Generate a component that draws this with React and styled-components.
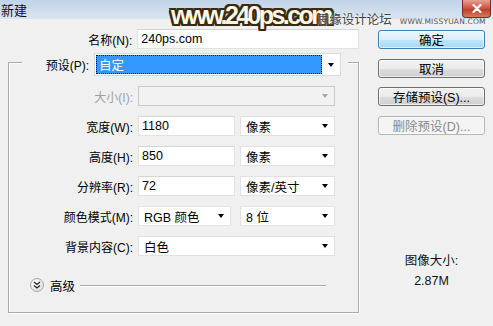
import React from 'react';
import styled, { createGlobalStyle } from 'styled-components';

const GlobalStyle = createGlobalStyle`
  html, body {
    margin: 0;
    padding: 0;
    background: #f0f0f0;
  }
  * { box-sizing: border-box; }
`;

const FONT = `"Liberation Sans", "Noto Sans CJK SC", sans-serif`;

const Window = styled.div`
  position: relative;
  width: 493px;
  height: 326px;
  background: #f0f0f0;
  font-family: ${FONT};
  font-size: 12px;
  color: #000;
  overflow: hidden;
  display: flex;
  flex-direction: column;
`;

const TitleBar = styled.div`
  height: 19px;
  flex-shrink: 0;
  background: linear-gradient(#c2d4e8, #d9e4f0);
  display: flex;
  align-items: center;
  justify-content: space-between;
  padding-left: 1px;
  font-size: 13px;
  color: #111;
`;

const CloseButton = styled.div`
  width: 29px;
  height: 18px;
  margin-right: 2px;
  align-self: flex-start;
  border: 1px solid #7a2a20;
  border-top: none;
  border-radius: 0 0 4px 4px;
  background: linear-gradient(#e7a090, #c9513d 50%, #b93a26 51%, #d67a5c);
  display: flex;
  align-items: center;
  justify-content: center;
`;

const Watermark = styled.div`
  position: absolute;
  left: 171px;
  top: 1px;
  display: flex;
  align-items: baseline;
  white-space: nowrap;
  pointer-events: none;
`;

const WmBig = styled.span`
  font-family: "Liberation Sans", sans-serif;
  font-weight: 800;
  font-size: 25px;
  letter-spacing: -2.6px;
  color: #fff9e6;
  text-shadow:
    -2px 0 0 #3b2a12, 2px 0 0 #3b2a12, 0 -2px 0 #3b2a12, 0 2px 0 #3b2a12,
    -2px -2px 0 #3b2a12, 2px 2px 0 #3b2a12, -2px 2px 0 #3b2a12, 2px -2px 0 #3b2a12,
    -1px -2px 0 #3b2a12, 1px 2px 0 #3b2a12, -2px 1px 0 #3b2a12, 2px -1px 0 #3b2a12;
`;

const WmCn = styled.span`
  font-family: "Noto Sans CJK SC", sans-serif;
  font-size: 12.5px;
  color: #444;
  margin-left: -14px;
  text-shadow: 0 0 2px #fff;
`;

const WmSmall = styled.span`
  font-family: "DejaVu Sans", sans-serif;
  font-size: 7.5px;
  color: #555;
  margin-left: 8px;
  letter-spacing: 0.2px;
`;

const Body = styled.div`
  flex: 1;
  display: flex;
  padding: 10px 0 0 8px;
  gap: 19px;
`;

const LeftColumn = styled.div`
  width: 351px;
  display: flex;
  flex-direction: column;
`;

const Row = styled.div`
  display: flex;
  align-items: center;
  height: 20px;
`;

const Label = styled.div`
  width: ${(p) => p.$w}px;
  margin-right: 5px;
  text-align: right;
  white-space: nowrap;
  color: ${(p) => (p.$disabled ? '#a0a0a0' : '#000')};
`;

const TextInput = styled.div`
  width: ${(p) => p.$w}px;
  height: 20px;
  background: #fff;
  border: 1px solid #e2e2e2;
  border-top-color: #d4d4d4;
  padding-left: 3px;
  display: flex;
  align-items: center;
  font-size: 12.5px;
`;

const Select = styled.div`
  width: ${(p) => p.$w}px;
  height: 20px;
  margin-left: ${(p) => p.$ml || 0}px;
  background: ${(p) => (p.$disabled ? '#f2f2f2' : '#fff')};
  border: 1px solid ${(p) => (p.$disabled ? '#c9c9c9' : '#e2e2e2')};
  display: flex;
  align-items: center;
  justify-content: space-between;
  padding: 0 3px 0 5px;
  font-size: 12.5px;
`;

const Arrow = styled.span`
  width: 0;
  height: 0;
  border-left: 3.5px solid transparent;
  border-right: 3.5px solid transparent;
  border-top: 4px solid ${(p) => (p.$disabled ? '#a8a8a8' : '#000')};
  margin-right: ${(p) => p.$mr ?? 3}px;
`;

const GroupBox = styled.div`
  margin-top: 13px;
  border: 1px solid #a9a9a9;
  box-shadow: inset 1px 1px 0 #fff, 1px 1px 0 #fff;
  height: 251px;
  display: flex;
  flex-direction: column;
  gap: 10px;
`;

const Legend = styled.div`
  margin: -10px 0 0 13px;
  width: 326px;
  height: 23px;
  background: #f0f0f0;
  display: flex;
  align-items: center;
`;

const PresetSelect = styled.div`
  width: 247px;
  height: 23px;
  background: #fff;
  border: 1px solid #dadada;
  padding: 1px;
  display: flex;
  align-items: center;
`;

const PresetValue = styled.div`
  width: 226px;
  height: 19px;
  background: #3399ff;
  outline: 1px dotted #000;
  outline-offset: -1px;
  color: #fff;
  padding-left: 3px;
  display: flex;
  align-items: center;
  font-size: 12.5px;
`;

const PresetArrowBox = styled.div`
  flex: 1;
  display: flex;
  justify-content: center;
`;

const AdvancedRow = styled.div`
  display: flex;
  align-items: center;
  margin: 12px 0 0 21px;
  width: 296px;
  height: 14px;
`;

const ToggleCircle = styled.div`
  width: 14px;
  height: 14px;
  border-radius: 50%;
  border: 1px solid #a8a8a8;
  background: radial-gradient(circle at 40% 35%, #ffffff, #e4e4e4 70%, #cfcfcf);
  display: flex;
  align-items: center;
  justify-content: center;
`;

const AdvancedText = styled.span`
  margin: 0 5px 0 6px;
  font-size: 12.5px;
`;

const Rule = styled.div`
  flex: 1;
  height: 1px;
  background: #a9a9a9;
  box-shadow: 0 1px 0 #fff;
`;

const RightColumn = styled.div`
  width: 107px;
  display: flex;
  flex-direction: column;
  padding-top: 1px;
`;

const ButtonStack = styled.div`
  display: flex;
  flex-direction: column;
  gap: 9.5px;
`;

const Button = styled.div`
  height: 19px;
  border-radius: 3px;
  display: flex;
  align-items: center;
  justify-content: center;
  font-size: 12.5px;
  border: 1px solid ${(p) => (p.$primary ? '#3c7fb1' : p.$disabled ? '#b5b5b5' : '#707070')};
  background: ${(p) =>
    p.$primary
      ? 'linear-gradient(#eaf6fd, #d9f0fc 50%, #bee6fd 51%, #a7d9f5)'
      : p.$disabled
      ? '#f4f4f4'
      : 'linear-gradient(#f2f2f2, #ebebeb 50%, #dddddd 51%, #cfcfcf)'};
  color: ${(p) => (p.$disabled ? '#8a8a8a' : '#000')};
  box-shadow: inset 0 0 0 1px rgba(255, 255, 255, 0.6);
`;

const SizeInfo = styled.div`
  margin-top: 116px;
  text-align: center;
  line-height: 20px;
  font-size: 12.5px;
  color: #111;
`;

const DoubleChevron = () => (
  <svg width="8" height="8" viewBox="0 0 8 8">
    <path d="M1 1 L4 3.5 L7 1 M1 4.5 L4 7 L7 4.5" fill="none" stroke="#222" strokeWidth="1.3" />
  </svg>
);

const FieldRow = ({ label, children, disabled }) => (
  <Row>
    <Label $w={124} $disabled={disabled}>{label}</Label>
    {children}
  </Row>
);

export default function App() {
  return (
    <>
      <GlobalStyle />
      <Window>
        <TitleBar>
          <span>新建</span>
          <CloseButton>
            <svg width="10" height="9" viewBox="0 0 10 9">
              <path d="M1.5 1 L8.5 8 M8.5 1 L1.5 8" stroke="#fff" strokeWidth="2.2" strokeLinecap="round" />
            </svg>
          </CloseButton>
        </TitleBar>

        <Watermark>
          <WmBig>www.240ps.com</WmBig>
          <WmCn>思缘设计论坛</WmCn>
          <WmSmall>WWW.MISSYUAN.COM</WmSmall>
        </Watermark>

        <Body>
          <LeftColumn>
            <Row>
              <Label $w={125}>名称(N):</Label>
              <TextInput $w={223}>240ps.com</TextInput>
            </Row>

            <GroupBox>
              <Legend>
                <Label $w={67}>预设(P):</Label>
                <PresetSelect>
                  <PresetValue>自定</PresetValue>
                  <PresetArrowBox>
                    <Arrow $mr={0} />
                  </PresetArrowBox>
                </PresetSelect>
              </Legend>

              <FieldRow label="大小(I):" disabled>
                <Select $w={197} $disabled>
                  <span />
                  <Arrow $disabled />
                </Select>
              </FieldRow>

              <FieldRow label="宽度(W):">
                <TextInput $w={97}>1180</TextInput>
                <Select $w={95} $ml={5}>
                  <span>像素</span>
                  <Arrow />
                </Select>
              </FieldRow>

              <FieldRow label="高度(H):">
                <TextInput $w={97}>850</TextInput>
                <Select $w={95} $ml={5}>
                  <span>像素</span>
                  <Arrow />
                </Select>
              </FieldRow>

              <FieldRow label="分辨率(R):">
                <TextInput $w={97}>72</TextInput>
                <Select $w={95} $ml={5}>
                  <span>像素/英寸</span>
                  <Arrow />
                </Select>
              </FieldRow>

              <FieldRow label="颜色模式(M):">
                <Select $w={93}>
                  <span>RGB 颜色</span>
                  <Arrow />
                </Select>
                <Select $w={95} $ml={9}>
                  <span>8 位</span>
                  <Arrow />
                </Select>
              </FieldRow>

              <FieldRow label="背景内容(C):">
                <Select $w={197}>
                  <span>白色</span>
                  <Arrow />
                </Select>
              </FieldRow>

              <AdvancedRow>
                <ToggleCircle>
                  <DoubleChevron />
                </ToggleCircle>
                <AdvancedText>高级</AdvancedText>
                <Rule />
              </AdvancedRow>
            </GroupBox>
          </LeftColumn>

          <RightColumn>
            <ButtonStack>
              <Button $primary>确定</Button>
              <Button>取消</Button>
              <Button>存储预设(S)...</Button>
              <Button $disabled>删除预设(D)...</Button>
            </ButtonStack>
            <SizeInfo>
              图像大小:
              <br />
              2.87M
            </SizeInfo>
          </RightColumn>
        </Body>
      </Window>
    </>
  );
}
